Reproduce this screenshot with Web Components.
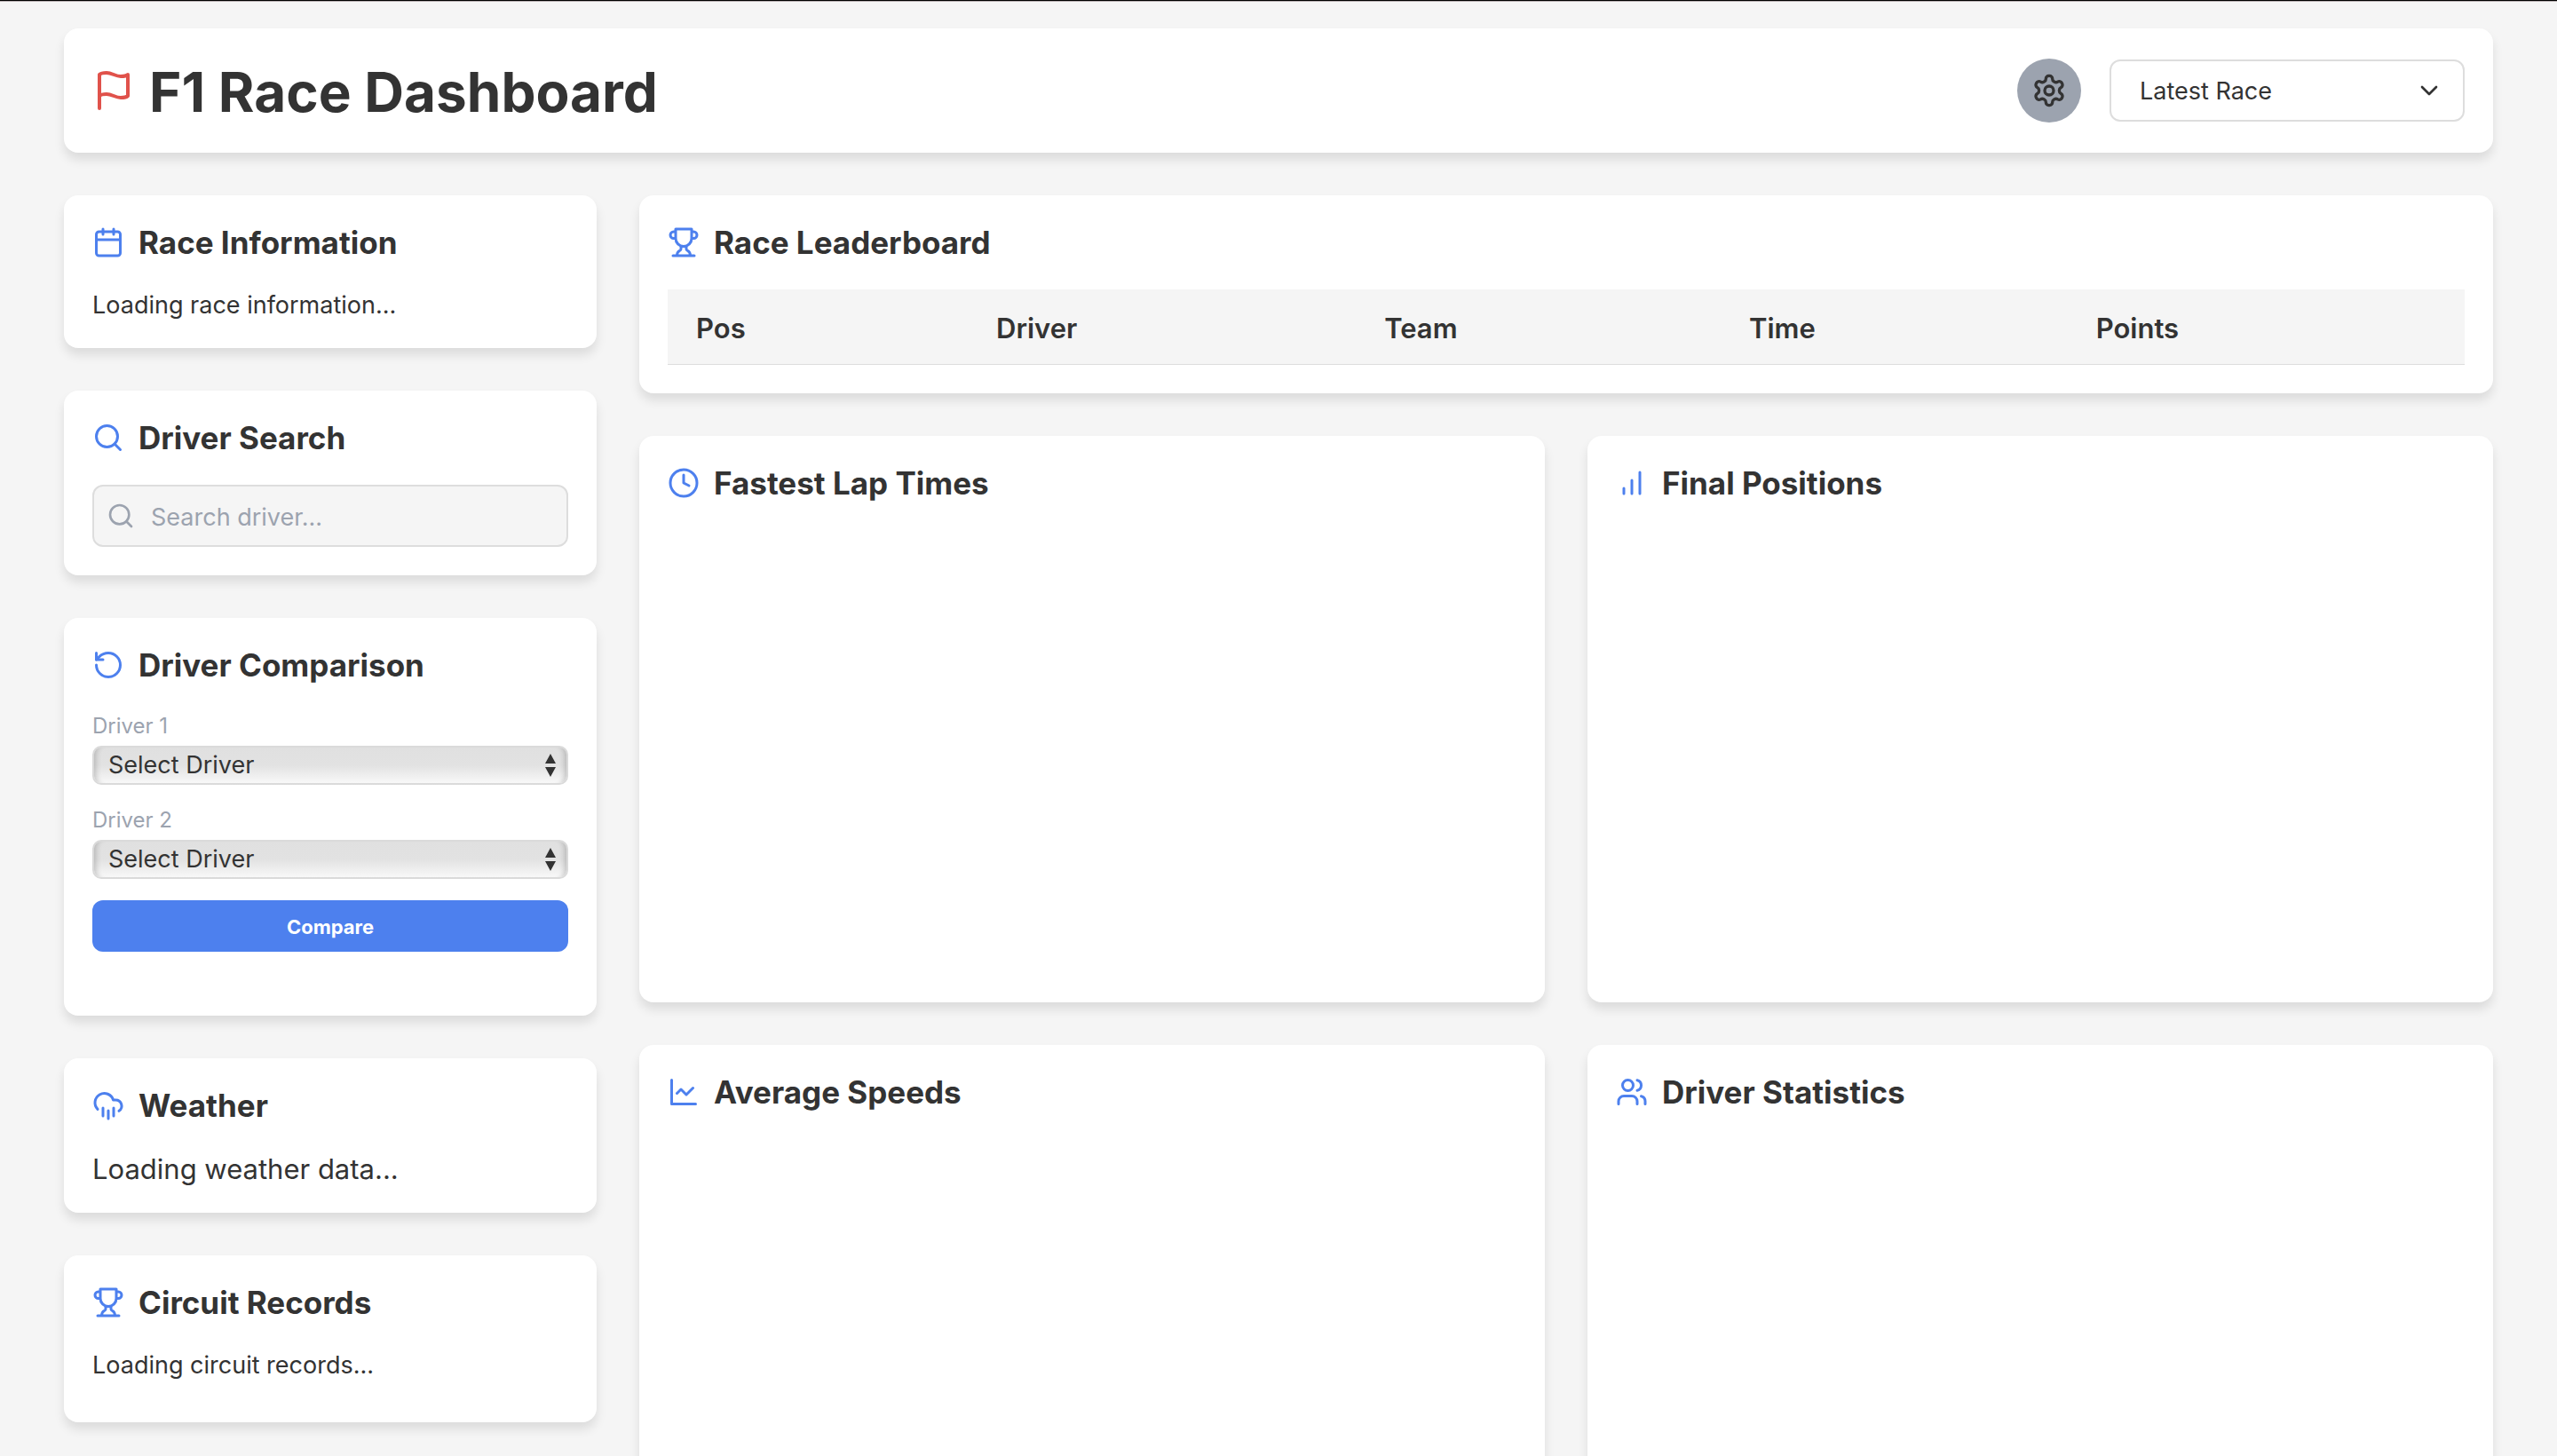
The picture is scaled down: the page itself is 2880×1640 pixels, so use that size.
<!DOCTYPE html>
<html lang="en">
<head>
<meta charset="utf-8">
<title>F1 Race Dashboard</title>
<style>
  html { border-top: 1px solid #000; background: #f5f5f5; }
  body {
    margin: 0;
    border-top: 1px solid #b8b0b2;
    color: #333;
    font-family: Inter, "Liberation Sans", sans-serif;
    font-size: 27px;
    line-height: 32px;
    --card: #fff;
    --muted: #9ca3af;
    --line: #ddd;
    --surface: #f5f5f5;
    --accent: #4d80ee;
    --danger: #e0524b;
  }
</style>
</head>
<body>
<race-dashboard></race-dashboard>

<script>
const ICONS = {
  flag: '<path d="M4 15s1-1 4-1 5 2 8 2 4-1 4-1V3s-1 1-4 1-5-2-8-2-4 1-4 1z"/><path d="M4 22v-7"/>',
  settings: '<path d="M12.22 2h-.44a2 2 0 0 0-2 2v.18a2 2 0 0 1-1 1.73l-.43.25a2 2 0 0 1-2 0l-.15-.08a2 2 0 0 0-2.73.73l-.22.38a2 2 0 0 0 .73 2.73l.15.1a2 2 0 0 1 1 1.72v.51a2 2 0 0 1-1 1.74l-.15.09a2 2 0 0 0-.73 2.73l.22.38a2 2 0 0 0 2.73.73l.15-.08a2 2 0 0 1 2 0l.43.25a2 2 0 0 1 1 1.73V20a2 2 0 0 0 2 2h.44a2 2 0 0 0 2-2v-.18a2 2 0 0 1 1-1.73l.43-.25a2 2 0 0 1 2 0l.15.08a2 2 0 0 0 2.73-.73l.22-.39a2 2 0 0 0-.73-2.73l-.15-.08a2 2 0 0 1-1-1.74v-.5a2 2 0 0 1 1-1.74l.15-.09a2 2 0 0 0 .73-2.73l-.22-.38a2 2 0 0 0-2.73-.73l-.15.08a2 2 0 0 1-2 0l-.43-.25a2 2 0 0 1-1-1.73V4a2 2 0 0 0-2-2z"/><circle cx="12" cy="12" r="3"/>',
  chevron: '<path d="m6 9 6 6 6-6"/>',
  calendar: '<path d="M8 2v4M16 2v4M3 10h18"/><rect x="3" y="4" width="18" height="18" rx="2"/>',
  search: '<circle cx="11" cy="11" r="8"/><path d="m21 21-4.3-4.3"/>',
  rotate: '<path d="M3 12a9 9 0 1 0 9-9 9.75 9.75 0 0 0-6.74 2.74L3 8"/><path d="M3 3v5h5"/>',
  rain: '<path d="M4 14.899A7 7 0 1 1 15.71 8h1.79a4.5 4.5 0 0 1 2.5 8.242M16 14v6M8 14v6M12 16v6"/>',
  trophy: '<path d="M6 9H4.5a2.5 2.5 0 0 1 0-5H6M18 9h1.5a2.5 2.5 0 0 0 0-5H18M4 22h16M10 14.66V17c0 .55-.47.98-.97 1.21C7.85 18.75 7 20.24 7 22M14 14.66V17c0 .55.47.98.97 1.21C16.15 18.75 17 20.24 17 22M18 2H6v7a6 6 0 0 0 12 0V2Z"/>',
  clock: '<circle cx="12" cy="12" r="10"/><path d="M12 6v6l4 2"/>',
  bars: '<path d="M12 20V10M18 20V4M6 20v-4"/>',
  line: '<path d="M3 3v18h18M19 9l-5 5-4-4-3 3"/>',
  users: '<path d="M16 21v-2a4 4 0 0 0-4-4H6a4 4 0 0 0-4 4v2"/><circle cx="9" cy="7" r="4"/><path d="M22 21v-2a4 4 0 0 0-3-3.87M16 3.13a4 4 0 0 1 0 7.75"/>'
};

function define(name, html, setup) {
  customElements.define(name, class extends HTMLElement {
    constructor() {
      super();
      this.attachShadow({ mode: "open" });
    }
    connectedCallback() {
      if (this.shadowRoot.hasChildNodes()) return;
      const template = document.createElement("template");
      template.innerHTML = html;
      this.shadowRoot.append(template.content.cloneNode(true));
      if (setup) setup(this, this.shadowRoot);
    }
  });
}

define("ui-icon", `
  <style>
    :host { display: block; flex: none; width: 36px; height: 36px; }
    svg { display: block; width: 100%; height: 100%; fill: none; stroke: currentColor;
          stroke-width: 2; stroke-linecap: round; stroke-linejoin: round; }
  </style>
  <svg viewBox="0 0 24 24" aria-hidden="true"></svg>`,
  (host, root) => { root.querySelector("svg").innerHTML = ICONS[host.getAttribute("name")]; });

define("dash-card", `
  <style>
    :host { display: block; padding: 32px; border-radius: 16px; background: var(--card);
            box-shadow: 0 8px 12px rgba(0, 0, 0, .1); }
    header { display: flex; align-items: center; gap: 16px; margin-bottom: 32px; }
    ui-icon { color: var(--accent); }
    h2 { margin: 0; font-size: 35px; line-height: 42px; font-weight: 700; }
  </style>
  <header><ui-icon></ui-icon><h2></h2></header>
  <slot></slot>`,
  (host, root) => {
    const icon = document.createElement("ui-icon");
    icon.setAttribute("name", host.getAttribute("icon"));
    root.querySelector("ui-icon").replaceWith(icon);
    root.querySelector("h2").textContent = host.getAttribute("heading");
  });

define("dash-header", `
  <style>
    :host { display: flex; align-items: center; justify-content: space-between; padding: 32px;
            border-radius: 16px; background: var(--card); box-shadow: 0 8px 12px rgba(0, 0, 0, .1); }
    .brand, .controls { display: flex; align-items: center; }
    .brand { gap: 16px; }
    .brand ui-icon { width: 48px; height: 48px; color: var(--danger); }
    h1 { margin: 0; padding-top: 4px; font-size: 62px; line-height: 72px; font-weight: 700; }
    .controls { gap: 32px; }
    button { display: grid; place-items: center; width: 72px; height: 72px; padding: 0; border: 0;
             border-radius: 50%; background: var(--muted); color: #333; }
    button ui-icon { width: 40px; height: 40px; }
    .picker { display: grid; align-items: center; width: 400px; }
    .picker > * { grid-area: 1 / 1; }
    select { appearance: none; width: 100%; height: 70px; padding: 2px 32px 0; border: 2px solid var(--line);
             border-radius: 12px; background: var(--card); color: inherit; font: inherit; }
    .picker ui-icon { justify-self: end; width: 32px; height: 32px; margin-right: 24px; pointer-events: none; }
  </style>
  <div class="brand"><ui-icon name="flag"></ui-icon><h1>F1 Race Dashboard</h1></div>
  <div class="controls">
    <button type="button" aria-label="Settings"><ui-icon name="settings"></ui-icon></button>
    <div class="picker">
      <select aria-label="Race"><option>Latest Race</option></select>
      <ui-icon name="chevron"></ui-icon>
    </div>
  </div>`);

define("driver-search", `
  <style>
    :host { display: grid; align-items: center; }
    ui-icon, input { grid-area: 1 / 1; }
    ui-icon { z-index: 1; width: 32px; height: 32px; margin-left: 16px; color: var(--muted); pointer-events: none; }
    input { box-sizing: border-box; width: 100%; height: 70px; padding: 2px 32px 0 64px;
            border: 2px solid var(--line); border-radius: 12px; background: var(--surface);
            color: inherit; font: inherit; }
    input::placeholder { color: var(--muted); opacity: 1; }
  </style>
  <ui-icon name="search"></ui-icon>
  <input type="text" placeholder="Search driver..." aria-label="Search driver">`);

define("driver-select", `
  <style>
    :host { display: grid; gap: 6px; }
    label { color: var(--muted); font-size: 24px; line-height: 32px; }
    .box { display: grid; align-items: center; }
    .box > * { grid-area: 1 / 1; }
    select { appearance: none; width: 100%; height: 44px; padding: 0 16px; border: 2px solid #dadada;
             border-radius: 10px; color: inherit; font: inherit;
             background: linear-gradient(#e0e0e0, #e2e2e2 50%, #f8f8f8);
             box-shadow: inset 8px 0 6px -6px rgba(0, 0, 0, .2), inset -8px 0 6px -6px rgba(0, 0, 0, .2); }
    svg { justify-self: end; width: 14px; height: 26px; margin-right: 13px; fill: #333; pointer-events: none; }
  </style>
  <label for="driver"></label>
  <div class="box">
    <select id="driver"><option>Select Driver</option></select>
    <svg viewBox="0 0 14 26" aria-hidden="true"><path d="M7 0l6 11H1zM7 26l6-11H1z"/></svg>
  </div>`,
  (host, root) => { root.querySelector("label").textContent = host.getAttribute("label"); });

define("driver-comparison", `
  <style>
    :host { display: flex; flex-direction: column; gap: 24px; margin-bottom: 40px; }
    button { height: 58px; padding: 2px 32px 0; border: 0; border-radius: 12px; background: var(--accent);
             color: #fff; font-family: inherit; font-size: 22px; font-weight: 700; }
  </style>
  <driver-select label="Driver 1"></driver-select>
  <driver-select label="Driver 2"></driver-select>
  <button type="button">Compare</button>`);

define("race-leaderboard", `
  <style>
    :host { display: block; }
    table { width: 100%; table-layout: fixed; border-collapse: collapse; }
    th { padding: 26px 32px 22px; border-bottom: 1px solid var(--line); background: var(--surface);
         font-size: 31px; line-height: 36px; font-weight: 600; text-align: left; }
  </style>
  <table>
    <colgroup><col style="width:16.7%"><col style="width:21.6%"><col style="width:20.3%"><col style="width:19.3%"><col></colgroup>
    <thead><tr><th>Pos</th><th>Driver</th><th>Team</th><th>Time</th><th>Points</th></tr></thead>
    <tbody></tbody>
  </table>`);

define("chart-panel", `
  <style>:host { display: block; height: 500px; }</style>`);

define("race-dashboard", `
  <style>
    :host { display: flex; flex-direction: column; gap: 48px; padding: 30px 72px; }
    main { display: grid; grid-template-columns: 600px 1fr; gap: 48px; align-items: start; }
    aside, section { display: flex; flex-direction: column; gap: 48px; }
    .charts { display: grid; grid-template-columns: 1fr 1fr; gap: 48px; }
    p { margin: 0; padding-top: 2px; }
    .weather { font-size: 31px; line-height: 34px; }
    .records { margin-bottom: 16px; }
  </style>
  <dash-header></dash-header>
  <main>
    <aside>
      <dash-card icon="calendar" heading="Race Information"><p>Loading race information...</p></dash-card>
      <dash-card icon="search" heading="Driver Search"><driver-search></driver-search></dash-card>
      <dash-card icon="rotate" heading="Driver Comparison"><driver-comparison></driver-comparison></dash-card>
      <dash-card icon="rain" heading="Weather"><p class="weather">Loading weather data...</p></dash-card>
      <dash-card icon="trophy" heading="Circuit Records"><p class="records">Loading circuit records...</p></dash-card>
    </aside>
    <section>
      <dash-card icon="trophy" heading="Race Leaderboard"><race-leaderboard></race-leaderboard></dash-card>
      <div class="charts">
        <dash-card icon="clock" heading="Fastest Lap Times"><chart-panel></chart-panel></dash-card>
        <dash-card icon="bars" heading="Final Positions"><chart-panel></chart-panel></dash-card>
        <dash-card icon="line" heading="Average Speeds"><chart-panel></chart-panel></dash-card>
        <dash-card icon="users" heading="Driver Statistics"><chart-panel></chart-panel></dash-card>
      </div>
    </section>
  </main>`);
</script>
</body>
</html>
